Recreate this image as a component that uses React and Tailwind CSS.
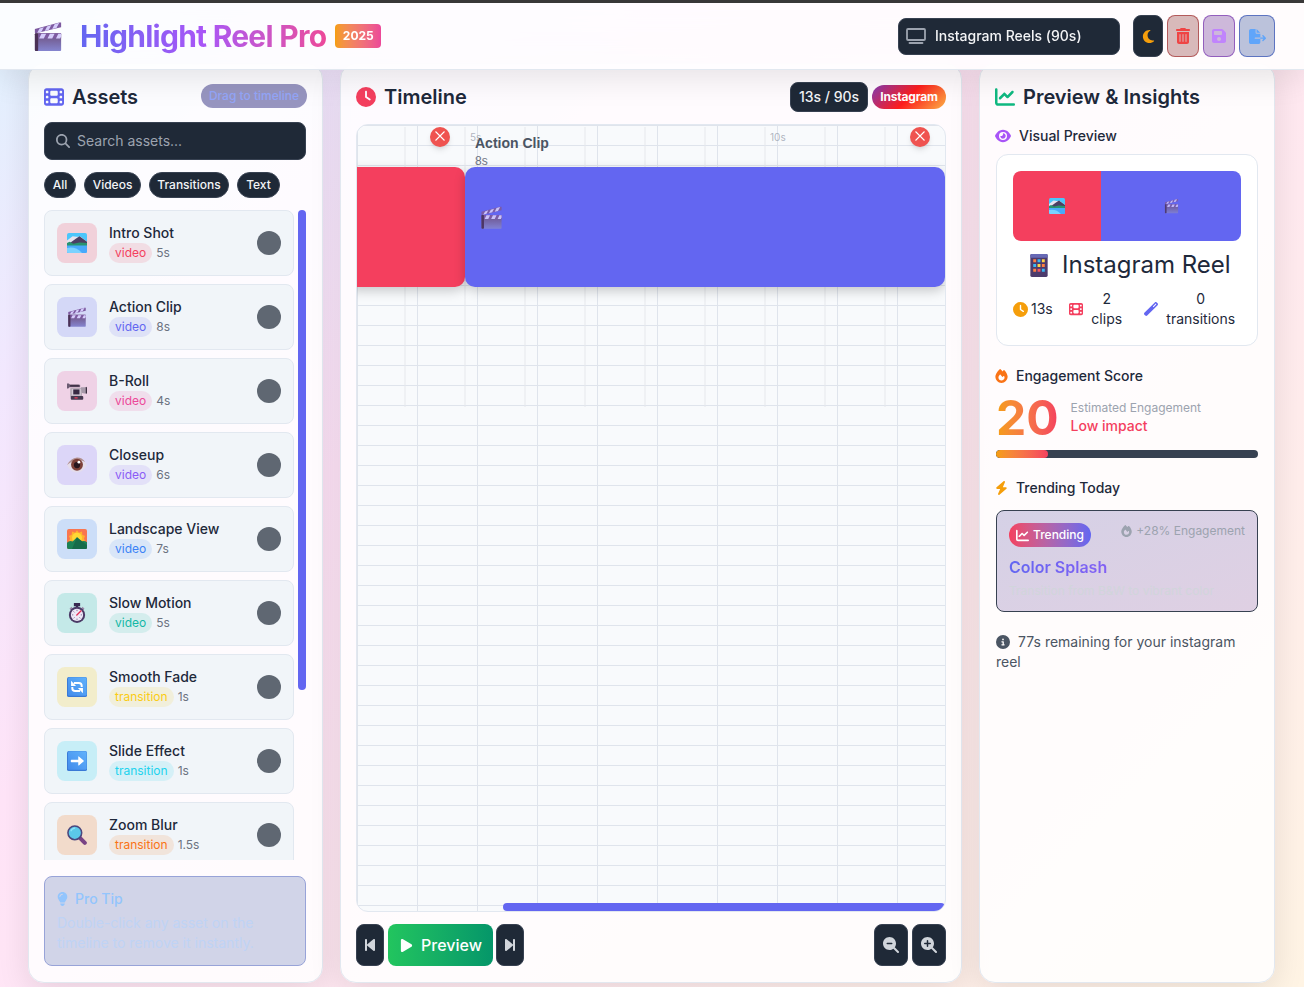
import React from "react";
import {
  FaFilm, FaClock, FaChartLine, FaEye, FaMoon, FaTrashCan, FaFloppyDisk, FaFileExport,
  FaMagnifyingGlass, FaLightbulb, FaBackwardStep, FaForwardStep, FaPlay,
  FaMagnifyingGlassMinus, FaMagnifyingGlassPlus, FaFire, FaWandMagic, FaBolt, FaCircleInfo,
} from "react-icons/fa6";

function Clapper({ className }) {
  return (
    <svg viewBox="0 0 32 32" className={className}>
      <defs>
        <linearGradient id="clapBody" x1="0" y1="0" x2="0" y2="1">
          <stop offset="0" stopColor="#6d4f7c" />
          <stop offset="1" stopColor="#8585d0" />
        </linearGradient>
      </defs>
      <path d="M2 8 28 1 30 1V6L3 12.5 2 12Z" fill="#7d5aa0" />
      <path d="M7 7.500 11.500 6 9 10.800 4.500 12ZM15 5.200 19.500 3.800 17 8.800 12.500 10ZM23 2.800 28 1.400 25 6.800 20.500 8Z" fill="#d5ccfb" />
      <rect x="2" y="12.500" width="28" height="19" rx="1" fill="url(#clapBody)" />
      <rect x="2" y="12.500" width="3.500" height="19" rx="1" fill="#4a3155" />
      <path d="M5.500 12.500H30V18H5.500Z" fill="#7d5aa0" />
      <path d="M9 13H14L11.500 18H6.500ZM18 13H23L20.500 18H15.500ZM27 13H30V16L29 18H24.500Z" fill="#d5ccfb" />
    </svg>
  );
}

function Landscape({ className }) {
  return (
    <svg viewBox="0 0 32 32" className={className}>
      <rect width="32" height="32" rx="3" fill="#4cc6fb" />
      <path d="M0 12 9 5 15 6 22 6 32 14V18H0Z" fill="#e6e3ee" />
      <path d="M3 17 14 9 20 5 32 14V18H0Z" fill="#4b3f63" />
      <path d="M0 16 4 14 10 17 20 15 32 16V21H0Z" fill="#28936f" />
      <path d="M0 20H32V29A3 3 0 0 1 29 32H3A3 3 0 0 1 0 29Z" fill="#48a9fb" />
      <path d="M0 24Q14 21 24 32H3A3 3 0 0 1 0 29Z" fill="#7ad2ff" />
    </svg>
  );
}

function Camcorder({ className }) {
  return (
    <svg viewBox="0 0 32 32" className={className}>
      <path d="M0 4H3L5 6H21V10H4L2 12H0Z" fill="#6b5b72" />
      <path d="M5 6H19V9H5Z" fill="#403347" />
      <rect x="5" y="11" width="19" height="15" rx="1.500" fill="#b9adb8" />
      <rect x="8" y="13" width="14" height="10" fill="#d3cbd6" />
      <rect x="10" y="13.500" width="10" height="8" fill="#372a42" />
      <path d="M22 10H28L32 9V20H28L24 19Z" fill="#a79aaa" />
      <rect x="30" y="10" width="2" height="10" fill="#3b2f41" />
      <rect x="6" y="24" width="20" height="6" rx="1.500" fill="#453950" />
      <rect x="12" y="26" width="5" height="2" fill="#f03b56" />
    </svg>
  );
}

function EyeBall({ className }) {
  return (
    <svg viewBox="0 0 32 32" className={className}>
      <path d="M0 16Q6 5 16 4Q27 5 32 16Q25 28 16 28Q6 28 0 16Z" fill="#e4dcea" />
      <path d="M0 16Q6 5 16 4Q24 4 29 11Q16 3 0 16Z" fill="#b08f90" />
      <circle cx="16" cy="15.500" r="9.500" fill="#7c4038" />
      <circle cx="16" cy="16" r="5" fill="#27151d" />
      <circle cx="19" cy="11.500" r="2.200" fill="#fff" />
    </svg>
  );
}

function Sunrise({ className }) {
  return (
    <svg viewBox="0 0 32 32" className={className}>
      <rect width="32" height="32" rx="3" fill="#f9764f" />
      <path d="M16 2 19 6 24 4 24.500 9 29 11 27 15 29 20H3L5 15 3 11 7.500 9 8 4 13 6Z" fill="#ffb22c" />
      <circle cx="16" cy="14" r="8" fill="#ffd735" />
      <path d="M0 22Q4 18 9 20L16 13 23 20Q28 18 32 21V29A3 3 0 0 1 29 32H3A3 3 0 0 1 0 29Z" fill="#1c8155" />
      <path d="M16 13 32 26V29A3 3 0 0 1 29 32H8Z" fill="#166b4a" />
    </svg>
  );
}

function Stopwatch({ className }) {
  return (
    <svg viewBox="0 0 32 32" className={className}>
      <path d="M11 0H21V5H18V8H14V5H11Z" fill="#382950" />
      <path d="M4 9 7 6 10 9 7 12ZM22 9 25 6 28 9 25 12Z" fill="#9b8aa8" />
      <circle cx="16" cy="19" r="13" fill="#4b3a66" />
      <circle cx="16" cy="19" r="9.800" fill="#eee8f7" />
      <path d="M16 11V13M16 25V27M8 19H10M22 19H24M10.500 13.500 12 15M10.500 24.500 12 23M20 23 21.500 24.500" stroke="#7c6f96" strokeWidth="1.500" />
      <path d="M15 20 23 12" stroke="#e32c55" strokeWidth="2" />
    </svg>
  );
}

function BlueTile({ className, children }) {
  return (
    <svg viewBox="0 0 32 32" className={className}>
      <defs>
        <linearGradient id="tileFace" x1="1" y1="0" x2="0" y2="1">
          <stop offset="0" stopColor="#60b2fb" />
          <stop offset="1" stopColor="#438cec" />
        </linearGradient>
      </defs>
      <rect width="32" height="32" rx="3" fill="#3979d6" />
      <rect x="1.500" y="0.500" width="30" height="29.500" rx="2.500" fill="url(#tileFace)" />
      {children}
    </svg>
  );
}

function Refresh({ className }) {
  return (
    <BlueTile className={className}>
      <path d="M11 9.500H19Q23.500 9.500 23.500 14V16M21 22.500H13Q8.500 22.500 8.500 18V16" fill="none" stroke="#fff" strokeWidth="3.200" />
      <path d="M6.500 6V14.500H14.500ZM25.500 26V17.500H17.500Z" fill="#fff" />
    </BlueTile>
  );
}

function ArrowTile({ className }) {
  return (
    <BlueTile className={className}>
      <path d="M7 14H18V9Q18 8 19 8.800L26.500 15Q27.300 15.800 26.500 16.600L19 23Q18 23.600 18 22.500V18H7Q6 18 6 16T7 14Z" fill="#fff" />
    </BlueTile>
  );
}

function Lens({ className }) {
  return (
    <svg viewBox="0 0 32 32" className={className}>
      <path d="M21 21 28.500 28.500" stroke="#794384" strokeWidth="6.500" strokeLinecap="round" />
      <circle cx="12.500" cy="12.500" r="11" fill="#5bc8e9" stroke="#4b477e" strokeWidth="2.500" />
      <path d="M6 10Q8 5 13 5" stroke="#8ee3f7" strokeWidth="2" fill="none" />
    </svg>
  );
}

function Phone({ className }) {
  return (
    <svg viewBox="0 0 20 26" className={className}>
      <rect x="1" y="1" width="18" height="24" rx="1.500" fill="#4c3b6c" />
      <path d="M1 5V2.500A1.500 1.500 0 0 1 2.500 1H17.500A1.500 1.500 0 0 1 19 2.500V5Z" fill="#6769b5" />
      <path d="M4 6.500H7V9.500H4ZM13 11.500H16V14.500H13ZM4 16.500H7V19.500H4Z" fill="#ff8040" />
      <path d="M8.500 6.500H11.500V9.500H8.500ZM4 11.500H7V14.500H4ZM13 16.500H16V19.500H13Z" fill="#39b8f5" />
      <path d="M13 6.500H16V9.500H13ZM8.500 11.500H11.500V14.500H8.500Z" fill="#ffd347" />
      <path d="M8.500 16.500H11.500V19.500H8.500Z" fill="#f25365" />
    </svg>
  );
}

const assets = [
  { name: "Intro Shot", type: "video", time: "5s", Icon: Landscape, tile: "bg-[#f43f5e]/20", tag: "bg-[#f43f5e]/13 text-[#f43f5e]" },
  { name: "Action Clip", type: "video", time: "8s", Icon: Clapper, tile: "bg-[#6366f1]/20", tag: "bg-[#6366f1]/13 text-[#6366f1]" },
  { name: "B-Roll", type: "video", time: "4s", Icon: Camcorder, tile: "bg-[#ec4899]/20", tag: "bg-[#ec4899]/13 text-[#ec4899]" },
  { name: "Closeup", type: "video", time: "6s", Icon: EyeBall, tile: "bg-[#8b5cf6]/20", tag: "bg-[#8b5cf6]/13 text-[#8b5cf6]" },
  { name: "Landscape View", type: "video", time: "7s", Icon: Sunrise, tile: "bg-[#3b82f6]/20", tag: "bg-[#3b82f6]/13 text-[#3b82f6]" },
  { name: "Slow Motion", type: "video", time: "5s", Icon: Stopwatch, tile: "bg-[#14b8a6]/20", tag: "bg-[#14b8a6]/13 text-[#14b8a6]" },
  { name: "Smooth Fade", type: "transition", time: "1s", Icon: Refresh, tile: "bg-[#facc15]/20", tag: "bg-[#facc15]/13 text-[#facc15]" },
  { name: "Slide Effect", type: "transition", time: "1s", Icon: ArrowTile, tile: "bg-[#22d3ee]/20", tag: "bg-[#22d3ee]/13 text-[#22d3ee]" },
  { name: "Zoom Blur", type: "transition", time: "1.5s", Icon: Lens, tile: "bg-[#f97316]/20", tag: "bg-[#f97316]/13 text-[#f97316]" },
];

const panel = "flex flex-col rounded-[16px] border border-[#e2e8f0] bg-white/85 px-[15px] pt-[20px] pb-[15px] shadow-[0_8px_32px_rgba(0,0,0,0.1)]";

function Header() {
  return (
    <header className="relative z-10 flex h-[67px] shrink-0 items-center justify-between border-b border-[#e2e8f0] bg-white/85 pr-[29px] pl-[33px] shadow-[0_8px_32px_rgba(0,0,0,0.1)] backdrop-blur-md">
      <div className="flex items-center">
        <Clapper className="h-[31px] w-[30px]" />
        <h1 className="ml-[17px] bg-linear-to-r from-[#6366f1] via-[#a855f7] to-[#ec4899] bg-clip-text text-[30px] leading-[40px] font-bold tracking-[-0.75px] whitespace-nowrap text-transparent">Highlight Reel Pro</h1>
        <span className="ml-[9px] flex h-6 w-[46px] items-center justify-center rounded-[4px] bg-linear-to-r from-[#f59e0b] to-[#ec4899] text-xs font-bold text-white">2025</span>
      </div>
      <div className="flex items-center">
        <div className="flex h-[37px] w-[222px] items-center rounded-[8px] border border-[#374151] bg-[#1f2937] pl-[7px] text-sm font-medium text-[#f3f4f6]">
          <svg viewBox="0 0 20 16" className="mr-[9px] h-4 w-5" fill="none" stroke="#9ca3af">
            <rect x="1" y="1" width="18" height="11" rx="1" strokeWidth="1.800" />
            <path d="M3.500 15H16.500" strokeWidth="1.800" strokeLinecap="round" />
          </svg>
          Instagram Reels (90s)
        </div>
        <div className="ml-[13px] flex gap-1">
          <button className="flex h-[42px] w-[30px] items-center justify-center rounded-[8px] border border-[#374151] bg-[#1f2937] text-[#f59e0b]"><FaMoon size={15} /></button>
          <button className="flex h-[42px] w-8 items-center justify-center rounded-[8px] border border-[#991b1b]/60 bg-[#7f1d1d]/30 text-[#ef4444]"><FaTrashCan size={16} /></button>
          <button className="flex h-[42px] w-8 items-center justify-center rounded-[8px] border border-[#6b21a8]/60 bg-[#581c87]/30 text-[#c084fc]"><FaFloppyDisk size={16} /></button>
          <button className="flex h-[42px] w-9 items-center justify-center rounded-[8px] border border-[#1e40af]/60 bg-[#1e3a8a]/30 text-[#60a5fa]"><FaFileExport size={17} /></button>
        </div>
      </div>
    </header>
  );
}

function Assets() {
  return (
    <section className={panel + " w-[295px]"}>
      <div className="flex h-[25px] shrink-0 items-center justify-between">
        <h2 className="flex items-center gap-2 text-[20px] font-semibold text-[#1e293b]"><FaFilm size={20} className="text-[#6366f1]" />Assets</h2>
        <span className="flex h-6 w-[106px] items-center justify-center self-start rounded-full bg-[#312e81]/50 text-xs font-medium text-[#93a5f8]">Drag to timeline</span>
      </div>
      <div className="mt-[13px] flex h-[38px] w-[262px] shrink-0 items-center gap-[7px] rounded-[8px] border border-[#374151] bg-[#1f2937] pl-[11px] text-sm text-[#9ca3af]"><FaMagnifyingGlass size={14} />Search assets...</div>
      <div className="mt-3 flex h-[26px] shrink-0 gap-2 text-xs font-medium text-[#f3f4f6]">
        <span className="flex w-8 items-center justify-center rounded-full border border-[#374151] bg-[#1f2937]">All</span>
        <span className="flex w-[57px] items-center justify-center rounded-full border border-[#374151] bg-[#1f2937]">Videos</span>
        <span className="flex w-20 items-center justify-center rounded-full border border-[#374151] bg-[#1f2937]">Transitions</span>
        <span className="flex w-[43px] items-center justify-center rounded-full border border-[#374151] bg-[#1f2937]">Text</span>
      </div>
      <div className="mt-3 flex h-[650px] shrink-0 gap-1 overflow-hidden">
        <div className="flex w-[250px] flex-col gap-2">
          {assets.map(({ name, type, time, Icon, tile, tag }) => (
            <div key={name} className="flex h-[66px] shrink-0 items-center rounded-[8px] border border-[#e2e8f0] bg-[#f1f5f9] px-3">
              <div className={"flex h-10 w-10 items-center justify-center rounded-[8px] " + tile}><Icon className="h-5 w-5" /></div>
              <div className="ml-3 flex-1">
                <div className="text-sm leading-5 font-medium text-[#1e293b]">{name}</div>
                <div className="flex h-5 items-center gap-1 text-xs text-[#6b7280]">
                  <span className={"rounded-full px-1.5 py-0.5 " + tag}>{type}</span>{time}
                </div>
              </div>
              <div className="h-6 w-6 rounded-full bg-[#5f6772]" />
            </div>
          ))}
        </div>
        <div className="h-[480px] w-2 rounded-full bg-[#6366f1]" />
      </div>
      <div className="mt-4 h-[90px] w-[262px] shrink-0 rounded-[8px] border border-[#98a3d8] bg-[#d1d4e8] px-3 pt-3 text-sm leading-5">
        <div className="flex items-center gap-[7px] font-medium text-[#93c5fd]"><FaLightbulb size={14} className="w-[11px]" />Pro Tip</div>
        <p className="mt-1 text-[#bfd3f5]">Double-click any asset on the timeline to remove it instantly.</p>
      </div>
    </section>
  );
}

const ticks = ["left-[47px]", "left-[107px]", "left-[167px]", "left-[227px]", "left-[287px]", "left-[347px]", "left-[407px]", "left-[467px]", "left-[527px]"];

function RemoveDot({ place }) {
  return (
    <div className={"absolute top-0.5 flex h-5 w-5 items-center justify-center rounded-full bg-[#ef5350] shadow-md " + place}>
      <svg viewBox="0 0 10 10" className="mb-[3px] h-[10px] w-[10px]" stroke="#fff" strokeWidth="1.100"><path d="M0.500 0.500 9.500 9.500M9.500 0.500 0.500 9.500" /></svg>
    </div>
  );
}

function Timeline() {
  return (
    <section className={panel + " w-[622px]"}>
      <div className="flex h-[26px] shrink-0 items-center justify-between">
        <h2 className="flex items-center gap-2 text-[20px] font-semibold text-[#1e293b]"><FaClock size={20} className="text-[#f43f5e]" />Timeline</h2>
        <div className="flex items-center gap-1">
          <span className="flex h-[30px] w-[78px] items-center justify-center rounded-[8px] border border-[#374151] bg-[#1f2937] text-sm font-medium text-[#f3f4f6]">13s / 90s</span>
          <span className="flex h-6 w-[74px] items-center justify-center rounded-full bg-[linear-gradient(135deg,#833ab4,#fd1d1d,#fcb045)] text-xs font-bold tracking-[-0.2px] text-white">Instagram</span>
        </div>
      </div>
      <div className="relative mt-[14px] h-[788px] shrink-0 overflow-hidden rounded-[12px] border border-[#e2e8f0] bg-[#f8fafc] bg-[linear-gradient(to_right,#dfe4ec_1px,transparent_1px),linear-gradient(to_bottom,#dfe4ec_1px,transparent_1px)] bg-[size:60px_20px]">
        {ticks.map((t) => <div key={t} className={"absolute top-0.5 h-[280px] w-[2px] bg-[#e5e7eb]/50 " + t} />)}
        <span className="absolute top-[5px] left-[113px] text-[10px] leading-[14px] text-[#9ca3af]/80">5s</span>
        <span className="absolute top-[5px] left-[413px] text-[10px] leading-[14px] text-[#9ca3af]/80">10s</span>
        <div className="absolute top-[42px] left-[-12px] h-[120px] w-[120px] rounded-[10px] bg-[#f43f5e] shadow-[0_4px_12px_rgba(0,0,0,0.2)]" />
        <div className="absolute top-[42px] left-[108px] flex h-[120px] w-[480px] rounded-[10px] bg-[#6366f1] pt-[38px] pl-[15px] shadow-[0_4px_12px_rgba(0,0,0,0.2)]"><Clapper className="h-[25px] w-[23px] opacity-90" /></div>
        <div className="absolute top-[8px] left-[118px] font-['Liberation_Sans',sans-serif] text-[#4b5563]">
          <div className="text-sm leading-5 font-bold">Action Clip</div>
          <div className="text-xs leading-4 text-[#6b7280]">8s</div>
        </div>
        <RemoveDot place="left-[73px]" />
        <RemoveDot place="left-[553px]" />
        <div className="absolute right-0 bottom-0 h-2 w-[442px] rounded-full bg-[#6366f1]" />
      </div>
      <div className="mt-3 flex h-[42px] shrink-0 justify-between text-[#d1d5db]">
        <div className="flex gap-1">
          <button className="flex w-7 items-center justify-center rounded-[8px] border border-[#374151] bg-[#1f2937]"><FaBackwardStep size={16} /></button>
          <button className="flex w-[105px] items-center justify-center gap-[7px] rounded-[8px] bg-linear-to-r from-[#22c55e] to-[#059669] text-base font-medium text-white"><FaPlay size={15} />Preview</button>
          <button className="-ml-px flex w-7 items-center justify-center rounded-[8px] border border-[#374151] bg-[#1f2937]"><FaForwardStep size={16} /></button>
        </div>
        <div className="flex gap-1">
          <button className="flex w-[34px] items-center justify-center rounded-[8px] border border-[#374151] bg-[#1f2937]"><FaMagnifyingGlassMinus size={16} /></button>
          <button className="flex w-[34px] items-center justify-center rounded-[8px] border border-[#374151] bg-[#1f2937]"><FaMagnifyingGlassPlus size={16} /></button>
        </div>
      </div>
    </section>
  );
}

function Insights() {
  return (
    <section className={panel + " w-[296px] text-[#1e293b]"}>
      <h2 className="flex h-[25px] shrink-0 items-center gap-2 text-[20px] font-semibold"><FaChartLine size={20} className="text-[#10b981]" />Preview &amp; Insights</h2>
      <h3 className="mt-[17px] flex h-5 shrink-0 items-center gap-2 text-sm font-medium"><FaEye size={16} className="text-[#a855f7]" />Visual Preview</h3>
      <div className="mt-2 ml-px h-[192px] w-[262px] shrink-0 rounded-[12px] border border-[#e2e8f0] bg-white p-4">
        <div className="flex h-[70px] overflow-hidden rounded-[8px]">
          <div className="flex w-[88px] items-center justify-center bg-[#f43f5e]"><Landscape className="h-4 w-4" /></div>
          <div className="flex flex-1 items-center justify-center bg-[#6366f1]"><Clapper className="h-4 w-[15px] opacity-80" /></div>
        </div>
        <div className="mt-2 flex h-8 items-center gap-[13px] pl-4 text-2xl whitespace-nowrap"><Phone className="h-[25px] w-5" />Instagram Reel</div>
        <div className="mt-2 flex h-10 items-center text-center text-sm leading-5">
          <FaClock size={15} className="text-[#f59e0b]" /><span className="ml-[3px]">13s</span>
          <FaFilm size={14} className="ml-4 text-[#f43f5e]" /><span className="ml-2 w-[32px]">2 clips</span>
          <FaWandMagic size={14} className="ml-[21px] text-[#6366f1]" /><span className="ml-2 w-[70px]">0 transitions</span>
        </div>
      </div>
      <h3 className="mt-5 flex h-5 shrink-0 items-center gap-2 text-sm font-medium"><FaFire size={14} className="w-[13px] text-[#f97316]" />Engagement Score</h3>
      <div className="mt-2 ml-px flex h-12 shrink-0 items-center gap-[12px]">
        <span className="bg-linear-to-r from-[#f59e0b] to-[#f43f5e] bg-clip-text text-5xl leading-[48px] font-bold text-transparent">20</span>
        <div><div className="text-xs leading-4 text-[#9ca3af]">Estimated Engagement</div><div className="text-sm leading-5 font-medium text-[#f43f5e]">Low impact</div></div>
      </div>
      <div className="mt-2 ml-px h-2 w-[262px] shrink-0 overflow-hidden rounded-full bg-[#374151]"><div className="h-2 w-[52px] rounded-full bg-linear-to-r from-[#f59e0b] to-[#f43f5e]" /></div>
      <h3 className="mt-5 flex h-5 shrink-0 items-center gap-2 text-sm font-medium"><FaBolt size={14} className="w-[13px] text-[#f59e0b]" />Trending Today</h3>
      <div className="mt-3 ml-px h-[102px] w-[262px] shrink-0 rounded-[8px] border border-[#374151] bg-linear-to-br from-[#d5d1e6] to-[#dfd0e3] p-3">
        <div className="flex items-start justify-between text-xs">
          <span className="flex h-6 w-[82px] items-center justify-center gap-1 rounded-full bg-linear-to-r from-[#f43f5e] to-[#6366f1] font-medium text-white"><FaChartLine size={13} />Trending</span>
          <span className="flex h-4 items-center gap-1 text-[#9ca3af]"><FaFire size={12} className="w-[11px]" />+28% Engagement</span>
        </div>
        <div className="mt-2 bg-linear-to-r from-[#6366f1] to-[#a855f7] bg-clip-text text-base leading-6 font-semibold text-transparent">Color Splash</div>
        <div className="mt-1 text-xs leading-4 text-[#d1d5db]">Transition from B&amp;W to vibrant color</div>
      </div>
      <p className="mt-5 ml-px w-[262px] text-sm leading-5 text-[#4b5563]"><FaCircleInfo size={14} className="mr-2 inline align-[-2px]" />77s remaining for your instagram reel</p>
    </section>
  );
}

export default function App() {
  return (
    <div className="flex h-[987px] w-[1304px] flex-col overflow-hidden bg-[linear-gradient(135deg,#e0f2fe_0%,#f3e8ff_17%,#ffe4f8_35%,#ffe9ef_65%,#fff4e4_100%)] font-['Inter',sans-serif]">
      <div className="h-[3px] shrink-0 bg-[#3a3a3a]" />
      <Header />
      <main className="-mt-[7px] flex h-[920px] shrink-0 justify-between pr-[29px] pl-[28px]">
        <Assets />
        <Timeline />
        <Insights />
      </main>
    </div>
  );
}
